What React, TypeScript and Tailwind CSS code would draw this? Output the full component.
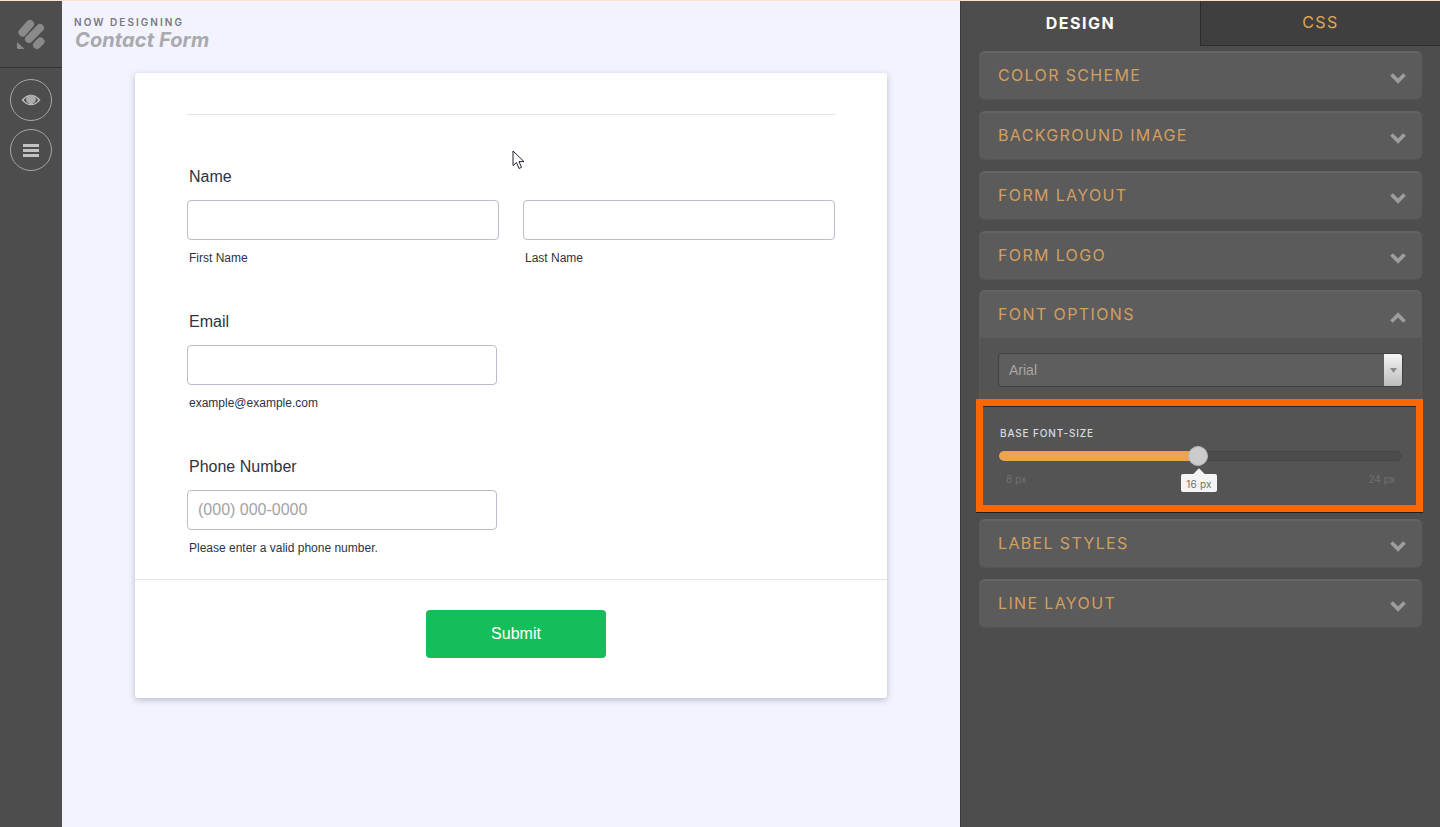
import { ReactNode } from 'react';

const inter = 'font-["Inter",sans-serif]';
const arial = 'font-["Liberation_Sans",Arial,sans-serif]';

function Chevron({ up }: { up?: boolean }) {
  return (
    <svg width="16" height="11" viewBox="0 0 16 11" className="mt-1.5">
      <polyline
        points={up ? '1.5,9.5 8,3 14.5,9.5' : '1.5,1.5 8,8 14.5,1.5'}
        fill="none"
        stroke="#9b9da0"
        strokeWidth="3.8"
      />
    </svg>
  );
}

function Section({ title }: { title: string }) {
  return (
    <div className="h-[49px] mb-[11px] pb-[2px] bg-[#5b5b5b] rounded-md border-t-2 border-t-[#646464] border-b border-b-[#555555] flex items-center justify-between pl-[19px] pr-[16px]">
      <span className={`${inter} text-[16px] text-[#d29f60] tracking-[1.35px]`}>{title}</span>
      <Chevron />
    </div>
  );
}

function Field({ label, hint, children }: { label: string; hint: ReactNode; children: ReactNode }) {
  return (
    <div className="mb-[44px]">
      <div className="h-6 leading-[26px] pl-[2px] text-[16px] text-[#2c3345]">{label}</div>
      <div className="mt-3">{children}</div>
      <div className="mt-[9px] h-4 leading-[18px] pl-[2px] text-[12px] text-[#2c3345]">{hint}</div>
    </div>
  );
}

function TextBox({ width, placeholder }: { width: string; placeholder?: string }) {
  return (
    <div className={`${width} h-10 border border-[#b8bdc9] rounded bg-white px-[10px] leading-[38px] text-[16px] text-[#a3a3a3]`}>
      {placeholder}
    </div>
  );
}

export default function App() {
  return (
    <div className="w-[1440px] h-[827px] overflow-hidden flex flex-col bg-[#f3f3fe]">
      <div className="h-px bg-[#fde0d0] shrink-0" />
      <div className="flex flex-1 min-h-0">
        {/* left rail */}
        <div className="w-[62px] shrink-0 bg-[#4d4d4d] flex flex-col items-center">
          <div className="w-full h-[67px] border-b border-[#333333] flex items-center justify-center">
            <svg width="62" height="66" viewBox="0 0 62 66">
              <g stroke="#8a8a8a" strokeWidth="8" strokeLinecap="round">
                <line x1="22.5" y1="31.5" x2="30" y2="23" />
                <line x1="29" y1="38" x2="40" y2="27" />
                <line x1="37" y1="44" x2="40.5" y2="40.5" />
              </g>
              <path d="M17 41 L24.5 48 L18.5 48 Q17 48 17 46.5 Z" fill="#8a8a8a" />
            </svg>
          </div>
          <div className="mt-[11px] w-[42px] h-[42px] rounded-full border border-[#a5a5a5] flex items-center justify-center">
            <svg width="20" height="14" viewBox="0 0 20 14">
              <path d="M0.5 7 Q10 -3.5 19.5 7 Q10 17.5 0.5 7 Z" fill="#c2c2c2" />
              <path d="M2.6 7.2 Q4 5 6.2 3.8 A4.6 4.6 0 1 0 13.8 3.8 Q16 5 17.4 7.2 Q10 15 2.6 7.2 Z" fill="#4d4d4d" />
              <circle cx="10" cy="6.2" r="4.4" fill="#a9a9a9" />
            </svg>
          </div>
          <div className="mt-2 w-[42px] h-[42px] rounded-full border border-[#a5a5a5] flex flex-col items-center justify-center gap-[2px]">
            <div className="w-4 h-[3px] bg-[#c2c2c2]" />
            <div className="w-4 h-[3px] bg-[#c2c2c2]" />
            <div className="w-4 h-[3px] bg-[#c2c2c2]" />
          </div>
        </div>

        {/* canvas */}
        <div className={`relative w-[898px] shrink-0 ${arial}`}>
          <div className="h-[72px] pl-3 pt-[15px]">
            <div className={`${inter} text-[10px] leading-3 font-semibold tracking-[2.05px] text-[#77777f]`}>NOW DESIGNING</div>
            <div className={`${inter} ml-[1px] text-[20px] leading-6 font-bold italic tracking-[0.1px] text-[#a9a9ae]`}>Contact Form</div>
          </div>
          <div className="ml-[73px] w-[752px] h-[625px] bg-white rounded-[3px] shadow-[0_2px_6px_rgba(80,85,120,0.35)] pt-[41px]">
            <div className="ml-[52px] mr-[52px] h-px bg-[#e3e5ec]" />
            <div className="ml-[52px] mt-[49px]">
              <Field
                label="Name"
                hint={
                  <div className="flex gap-6">
                    <span className="w-[312px]">First Name</span>
                    <span className="w-[312px]">Last Name</span>
                  </div>
                }
              >
                <div className="flex gap-6">
                  <TextBox width="w-[312px]" />
                  <TextBox width="w-[312px]" />
                </div>
              </Field>
              <Field label="Email" hint="example@example.com">
                <TextBox width="w-[310px]" />
              </Field>
              <div>
                <div className="h-6 leading-[26px] pl-[2px] text-[16px] text-[#2c3345]">Phone Number</div>
                <div className="mt-3"><TextBox width="w-[310px]" placeholder="(000) 000-0000" /></div>
                <div className="mt-[9px] h-4 leading-[18px] pl-[2px] text-[12px] text-[#2c3345]">Please enter a valid phone number.</div>
              </div>
            </div>
            <div className="mt-[24px] h-px bg-[#e3e5ec]" />
            <div className="mt-[30px] flex justify-center">
              <div className="ml-[10px] w-[180px] h-12 rounded bg-[#18bd5b] text-white text-[16px] flex items-center justify-center">Submit</div>
            </div>
          </div>
          {/* mouse pointer in the capture */}
          <svg width="14" height="20" viewBox="0 0 14 20" className="absolute left-[450px] top-[149px]">
            <path d="M1 1 L1 15.5 L4.5 12.5 L7 18.5 L9.5 17.3 L7 11.6 L12 11.6 Z" fill="#ffffff" stroke="#1d2230" strokeWidth="1" />
          </svg>
        </div>

        {/* right panel */}
        <div className="flex-1 min-w-0 bg-[#4d4d4d] border-l border-[#3c3c3c] flex flex-col">
          <div className="h-[45px] flex shrink-0">
            <div className={`${inter} w-[239px] pb-[2px] flex items-center justify-center text-[16px] font-bold tracking-[1.5px] text-white`}>DESIGN</div>
            <div className={`${inter} flex-1 pb-[2px] bg-[#3f3f3f] border-l border-b border-[#2b2b2b] flex items-center justify-center text-[16px] tracking-[1.5px] text-[#e0a655]`}>CSS</div>
          </div>
          <div className="pl-[18px] pr-[18px] pt-[5px]">
            <Section title="COLOR SCHEME" />
            <Section title="BACKGROUND IMAGE" />
            <Section title="FORM LAYOUT" />
            <Section title="FORM LOGO" />

            {/* open section */}
            <div className="-mt-px h-[48px] pb-[2px] bg-[#5d5d5d] rounded-t-md border-t-2 border-t-[#646464] flex items-center justify-between pl-[19px] pr-[16px]">
              <span className={`${inter} text-[16px] text-[#d29f60] tracking-[1.4px]`}>FONT OPTIONS</span>
              <Chevron up />
            </div>
            <div className="h-[61px] bg-[#545454] border-x border-[#5c5c5c] pt-[15px] pl-[18px] pr-[18px]">
              <div className={`${arial} h-[34px] flex rounded border border-[#3f3f3f] bg-[#5e5e5e] overflow-hidden`}>
                <div className="flex-1 pl-[10px] leading-[32px] text-[14px] text-[#a6a6a6]">Arial</div>
                <div className="w-[18px] bg-gradient-to-b from-[#f5f5f5] to-[#bdbdbd] flex items-center justify-center">
                  <svg width="7" height="5" viewBox="0 0 7 5"><path d="M0 0 L7 0 L3.5 5 Z" fill="#8a8a8a" /></svg>
                </div>
              </div>
            </div>

            {/* highlighted slider */}
            <div className="-ml-[3px] -mr-px h-[113px] border-[7px] border-[#ff6600] bg-[#545454] shadow-[0_1px_0_#1f1f1f]">
              <div className="relative h-full border-t border-[#262626] pl-[16px] pr-[14px] pt-[20px]">
                <div className={`${inter} ml-px text-[10px] leading-3 font-medium tracking-[0.85px] text-[#d8dde2]`}>BASE FONT-SIZE</div>
                <div className="relative mt-[12px] h-[10px] rounded-full bg-[#4c4c4c] border border-[#464646]">
                  <div className="absolute -left-px -top-px h-[10px] w-[200px] rounded-l-full bg-[#eca44f]" />
                  <div className="absolute left-[188px] -top-[6px] w-5 h-5 rounded-full bg-[#cccccc] border border-[#b5b5b5]" />
                </div>
                <div className={`${inter} mt-[12px] flex justify-between pl-[7px] pr-[7px] text-[10px] leading-3 text-[#707070]`}>
                  <span>8 px</span>
                  <span>24 px</span>
                </div>
                <div className={`${inter} absolute left-[198px] top-[67px] w-9 h-[18px] rounded-[2px] bg-[#f4f4f4] text-[10px] leading-[20px] tracking-[0.2px] text-center text-[#707070]`}>
                  16 px
                  <div className="absolute left-[14px] -top-[4px] w-2 h-2 rotate-45 bg-[#f4f4f4]" />
                </div>
              </div>
            </div>

            <div className="mt-[7px]"><Section title="LABEL STYLES" /></div>
            <Section title="LINE LAYOUT" />
          </div>
        </div>
      </div>
    </div>
  );
}
